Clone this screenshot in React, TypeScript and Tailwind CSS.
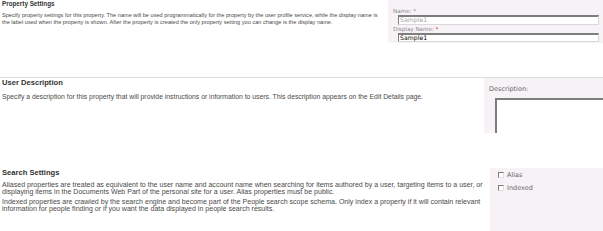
const SANS = "font-['Liberation_Sans',Arial,sans-serif]";
const VERDANA = "font-['DejaVu_Sans',Verdana,sans-serif]";

function Checkbox({ label }: { label: string }) {
  return (
    <div className="flex items-center h-[13px]">
      <span className="w-[6px] h-[6px] bg-white border-t border-l border-[#7a7a7a] border-b border-r border-b-[#e0e0e0] border-r-[#e0e0e0]" />
      <span className={`${VERDANA} ml-[3px] text-[6.5px] leading-[8px] text-[#666]`}>{label}</span>
    </div>
  );
}

function TextBox({ value, disabled }: { value: string; disabled?: boolean }) {
  return (
    <div
      className={`ml-[5px] h-[9.5px] bg-white border-t-2 border-l border-[#7d7d7d] border-r border-b border-r-[#d8d8d8] border-b-[#d8d8d8] flex items-center pl-[1px] ${VERDANA} text-[6.2px] leading-none ${
        disabled ? "text-[#a3a3a3]" : "text-black"
      }`}
    >
      {value}
    </div>
  );
}

export default function App() {
  return (
    <div className={`w-[603px] h-[231px] bg-white overflow-hidden ${SANS}`}>
      {/* ── Property Settings ── */}
      <section className="flex h-[77px]">
        <div className="flex-1 pl-[2px] text-[#4a4a4a]">
          <h2 className="text-[6.3px] leading-[8px] font-bold text-[#333]">Property Settings</h2>
          <p className="mt-[3.5px] text-[5.62px] leading-[7px] whitespace-nowrap">
            Specify property settings for this property. The name will be used programmatically for the property by the user profile service, while the display name is
            <br />
            the label used when the property is shown. After the property is created the only property setting you can change is the display name.
          </p>
        </div>
        <div className="w-[215px] h-[43px] bg-[#f6f2f6] pl-[5px] pr-[4px] pt-[8px]">
          <div className={`${VERDANA} text-[5.6px] leading-[7px] text-[#8c8c8c]`}>
            Name: <span className="text-[#8c8c8c]">*</span>
          </div>
          <TextBox value="Sample1" disabled />
          <div className={`${VERDANA} mt-[1px] text-[5.6px] leading-[7px] text-[#8c8c8c]`}>
            Display Name: <span className="text-[#e03030]">*</span>
          </div>
          <TextBox value="Sample1" />
        </div>
      </section>

      <div className="h-px bg-[#dcdcdc]" />

      {/* ── User Description ── */}
      <section className="flex h-[90px]">
        <div className="flex-1 pl-[2px] text-[#4a4a4a]">
          <h2 className="pt-px text-[7.6px] leading-[8px] font-bold text-[#333]">User Description</h2>
          <p className="mt-[6px] text-[6.82px] leading-[8px] whitespace-nowrap">
            Specify a description for this property that will provide instructions or information to users. This description appears on the Edit Details page.
          </p>
        </div>
        <div className="w-[119px] h-[55px] bg-[#f6f2f6] pl-[5px] pt-[7px] overflow-hidden">
          <div className={`${VERDANA} text-[6.5px] leading-[8px] text-[#666]`}>Description:</div>
          <div className="ml-[6px] mt-[5px] w-[220px] h-[60px] bg-white border-t-2 border-l-2 border-[#7d7d7d]" />
        </div>
      </section>

      {/* ── Search Settings ── */}
      <section className="flex h-[63px]">
        <div className="flex-1 pl-[2px] text-[#4a4a4a]">
          <h2 className="pt-px text-[7.6px] leading-[8px] font-bold text-[#333]">Search Settings</h2>
          <p className="mt-[3.5px] text-[7.05px] leading-[7px] whitespace-nowrap">
            Aliased properties are treated as equivalent to the user name and account name when searching for items authored by a user, targeting items to a user, or
            <br />
            displaying items in the Documents Web Part of the personal site for a user. Alias properties must be public.
          </p>
          <p className="mt-[3px] text-[7.05px] leading-[7px] whitespace-nowrap">
            Indexed properties are crawled by the search engine and become part of the People search scope schema. Only index a property if it will contain relevant
            <br />
            information for people finding or if you want the data displayed in people search results.
          </p>
        </div>
        <div className="w-[113px] h-full bg-[#f6f2f6] pl-[8px]">
          <Checkbox label="Alias" />
          <Checkbox label="Indexed" />
        </div>
      </section>
    </div>
  );
}
